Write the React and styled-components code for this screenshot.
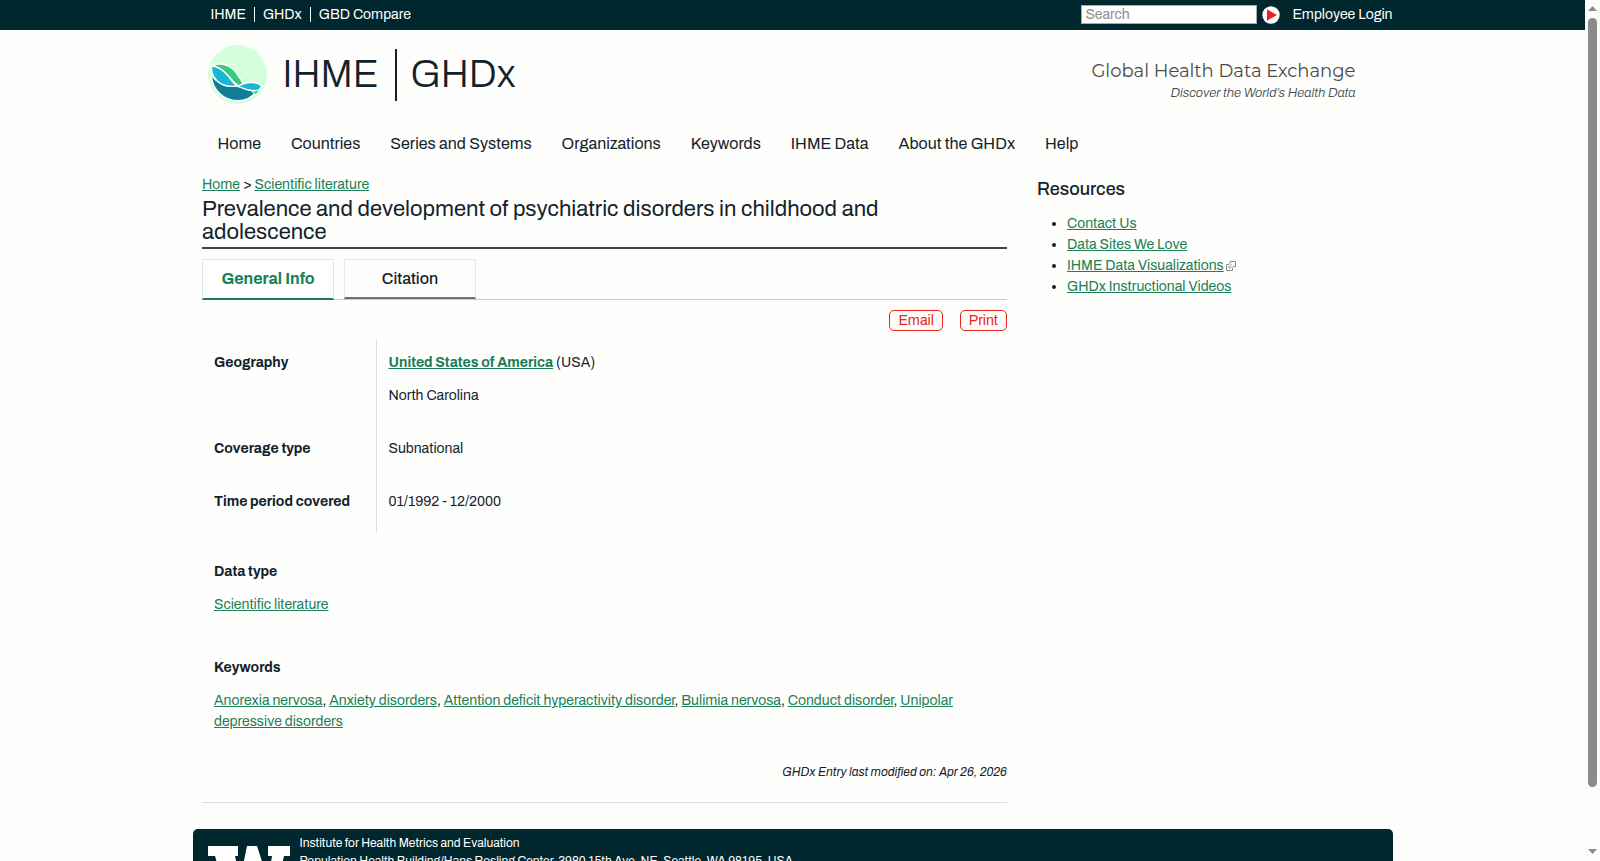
import React from "react";
import styled, { createGlobalStyle } from "styled-components";

const ink = "#13222b";
const navy = "#00262e";
const green = "#1a7f56";
const red = "#e8231a";

const GlobalStyle = createGlobalStyle`
  * { box-sizing: border-box; }
  body {
    margin: 0;
    background: #fefefd;
    color: ${ink};
    font-family: Archivo, "Liberation Sans", Arial, sans-serif;
    font-size: 14px;
    line-height: 21px;
  }
`;

const Window = styled.div`
  display: flex;
  height: 100vh;
`;
const Page = styled.div`
  flex: 1;
  overflow-y: auto;
  scrollbar-width: none;
`;
const Container = styled.div`
  max-width: 1200px;
  margin: 0 auto;
`;

const TopBar = styled.div`
  background: ${navy};
`;
const TopRow = styled(Container)`
  display: flex;
  align-items: center;
  justify-content: space-between;
  height: 30px;
  padding-bottom: 1px;
`;
const SiteLinks = styled.nav`
  display: flex;
  align-items: center;
  padding-left: 10px;
`;
const TopLink = styled.a`
  color: #fff;
  line-height: 15px;
  text-decoration: none;
`;
const SiteLink = styled(TopLink)`
  padding: 0 8px;
  border-left: ${(p) => (p.$first ? "0" : "1px solid #fff")};
`;
const Search = styled.form`
  display: flex;
  align-items: center;
`;
const SearchInput = styled.input`
  width: 176px;
  height: 19px;
  padding: 0 3px;
  border: 1px solid #aaa;
  background: #fff;
  font: inherit;
  &::placeholder { color: #8f8f8f; }
`;
const GoButton = styled.button`
  display: flex;
  margin: 0 12px 0 5px;
  padding: 0;
  border: 0;
  background: none;
`;

const Header = styled(Container)`
  display: flex;
  justify-content: space-between;
  align-items: flex-start;
  padding: 15px 37px 0 15px;
`;
const Brand = styled.a`
  display: flex;
  align-items: center;
  color: ${ink};
  text-decoration: none;
  font-weight: 300;
  font-size: 38px;
  line-height: 58px;
`;
const BrandName = styled.span`
  padding-left: ${(p) => (p.$first ? 16 : 13)}px;
`;
const BrandRule = styled.span`
  width: 2px;
  height: 52px;
  margin-left: 17px;
  background: ${ink};
`;
const Slogan = styled.div`
  padding-top: 14px;
  color: #4a4a4a;
  text-align: right;
`;
const SloganTitle = styled.div`
  font-family: Montserrat, Inter, sans-serif;
  font-size: 18px;
  line-height: 24px;
`;
const SloganText = styled.div`
  font-style: italic;
  font-weight: 300;
  font-size: 13px;
  line-height: 20px;
`;

const MainNav = styled(Container)`
  display: flex;
  gap: 30px;
  padding: 28px 25px 18px;
  font-size: 16px;
  line-height: 24px;
`;
const NavLink = styled.a`
  color: ${ink};
  text-decoration: none;
`;

const Columns = styled(Container)`
  display: flex;
  gap: 30px;
  max-width: 1201px;
  padding: 0 10px;
`;
const Main = styled.main`
  width: 805px;
`;
const Sidebar = styled.aside`
  flex: 1;
  padding-top: 1px;
`;
const Link = styled.a`
  color: ${green};
  font-weight: ${(p) => (p.$bold ? 700 : 400)};
`;
const Title = styled.h1`
  margin: 0 0 10px;
  padding: 3px 0;
  border-bottom: 2px solid #444;
  font-size: 22px;
  font-weight: 400;
  line-height: 23px;
`;
const Tabs = styled.div`
  display: flex;
  gap: 10px;
  height: 41px;
  border-bottom: 1px solid #ccc;
`;
const Tab = styled.button`
  width: 132px;
  height: ${(p) => (p.$active ? 41 : 40)}px;
  padding: 0 0 ${(p) => (p.$active ? 2 : 0)}px;
  border: 1px solid #e6e6e6;
  border-bottom: 2px solid ${(p) => (p.$active ? green : "#68747c")};
  background: ${(p) => (p.$active ? "#fff" : "transparent")};
  color: ${(p) => (p.$active ? green : ink)};
  font: inherit;
  font-size: 16px;
  font-weight: ${(p) => (p.$active ? 700 : 500)};
`;
const Actions = styled.div`
  display: flex;
  justify-content: flex-end;
  gap: 17px;
  padding: 10px 0 9px;
`;
const ActionButton = styled.button`
  height: 21px;
  padding: 0 8px;
  border: 1px solid ${red};
  border-radius: 5px;
  background: none;
  color: ${red};
  font: inherit;
  line-height: 19px;
`;

const Facts = styled.table`
  width: 100%;
  border-collapse: collapse;
`;
const FactName = styled.th`
  width: 174px;
  padding: 12px 12px 20px;
  border-right: 1px solid #ddd;
  text-align: left;
  vertical-align: top;
`;
const FactValue = styled.td`
  padding: 12px 12px 20px;
  vertical-align: top;
`;
const Paragraph = styled.p`
  margin: 0 0 12px;
`;
const Section = styled.section`
  padding: ${(p) => (p.$first ? 29 : 42)}px 40px 0 12px;
`;
const SectionTitle = styled.h2`
  margin: 0 0 12px;
  font-size: 14px;
  line-height: 21px;
`;
const Modified = styled.div`
  padding: 30px 0 19px;
  border-bottom: 1px solid #ddd;
  font-size: 12px;
  font-style: italic;
  text-align: right;
`;

const SideTitle = styled.h2`
  margin: 0;
  font-size: 18px;
  font-weight: 500;
  line-height: 28px;
`;
const SideList = styled.ul`
  margin: 10px 0 0;
  padding-left: 30px;
`;
const ExternalIcon = styled.svg`
  margin-left: 2px;
  vertical-align: -1px;
`;

const Footer = styled(Container)`
  display: flex;
  gap: 10px;
  margin-top: 26px;
  padding: 5px 15px 20px;
  border-radius: 5px;
  background: ${navy};
  color: #fff;
  font-size: 12px;
  line-height: 18px;
`;
const FooterLogo = styled.svg`
  margin-top: 12px;
`;

const ScrollTrack = styled.div`
  display: flex;
  flex-direction: column;
  align-items: center;
  width: 15px;
  padding: 6px 0 7px;
  background: #fcfcfc;
`;
const ScrollThumb = styled.div`
  width: 9px;
  height: 90.7%;
  margin: 7px 0 auto;
  border-radius: 5px;
  background: #8b8b8b;
`;
const Arrow = ({ down }) => (
  <svg width="9" height="5" viewBox="0 0 9 5">
    <path d={down ? "M0 0H9L4.500 5Z" : "M0 5H9L4.500 0Z"} fill="#8b8b8b" />
  </svg>
);

const navItems = ["Home", "Countries", "Series and Systems", "Organizations", "Keywords", "IHME Data", "About the GHDx", "Help"];
const keywords = ["Anorexia nervosa", "Anxiety disorders", "Attention deficit hyperactivity disorder", "Bulimia nervosa", "Conduct disorder", "Unipolar depressive disorders"];
const resources = ["Contact Us", "Data Sites We Love", "IHME Data Visualizations", "GHDx Instructional Videos"];

const WaveLogo = () => (
  <svg width="59" height="59" viewBox="54 135 177 177" aria-hidden="true">
    <circle cx="142.500" cy="223.500" r="88.500" fill="#d4ffdc" />
    <g stroke="#fff" strokeWidth="4" strokeLinejoin="round">
      <path d="M64 222C74 244 97 257 137 257C155 259 166 273 198 274C186 293 165 302 143 302C100 302 66 270 64 222Z" fill="#0f7c98" />
      <path d="M68 195C96 187 120 197 135 214C146 227 151 240 161 251L147 258C134 251 127 240 115 228C102 214 88 204 68 195Z" fill="#36c980" />
      <path d="M64 198C87 200 101 211 113 226C124 239 130 250 142 258C122 261 104 258 92 251C74 239 63 220 64 198Z" fill="#19b7d1" />
      <path d="M144 259C160 249 174 246 190 248C203 249 212 254 214 259C212 267 207 271 197 272C174 273 160 265 144 259Z" fill="#19b7d1" />
      <path d="M186 277C194 273 200 272 207 271C205 276 200 281 197 282Z" fill="#36c980" strokeWidth="2" />
    </g>
  </svg>
);

export default function App() {
  return (
    <Window>
      <GlobalStyle />
      <Page>
        <TopBar>
          <TopRow>
            <SiteLinks>
              <SiteLink href="#" $first>IHME</SiteLink>
              <SiteLink href="#">GHDx</SiteLink>
              <SiteLink href="#">GBD Compare</SiteLink>
            </SiteLinks>
            <Search>
              <SearchInput type="text" placeholder="Search" aria-label="Search" />
              <GoButton type="button" aria-label="Go">
                <svg width="18" height="18" viewBox="0 0 18 18">
                  <circle cx="9" cy="9" r="8.700" fill="#fff" />
                  <path d="M5 3.300L15 9L5 14.700Z" fill={red} />
                </svg>
              </GoButton>
              <TopLink href="#">Employee Login</TopLink>
            </Search>
          </TopRow>
        </TopBar>
        <Header as="header">
          <Brand href="#">
            <WaveLogo />
            <BrandName $first>IHME</BrandName>
            <BrandRule />
            <BrandName>GHDx</BrandName>
          </Brand>
          <Slogan>
            <SloganTitle>Global Health Data Exchange</SloganTitle>
            <SloganText>Discover the World’s Health Data</SloganText>
          </Slogan>
        </Header>
        <MainNav as="nav">
          {navItems.map((item) => <NavLink href="#" key={item}>{item}</NavLink>)}
        </MainNav>
        <Columns>
          <Main>
            <div><Link href="#">Home</Link> &gt; <Link href="#">Scientific literature</Link></div>
            <Title>Prevalence and development of psychiatric disorders in childhood and adolescence</Title>
            <Tabs>
              <Tab type="button" $active>General Info</Tab>
              <Tab type="button">Citation</Tab>
            </Tabs>
            <Actions>
              <ActionButton type="button">Email</ActionButton>
              <ActionButton type="button">Print</ActionButton>
            </Actions>
            <Facts>
              <tbody>
                <tr>
                  <FactName scope="row">Geography</FactName>
                  <FactValue>
                    <Paragraph><Link href="#" $bold>United States of America</Link> (USA)</Paragraph>
                    North Carolina
                  </FactValue>
                </tr>
                <tr>
                  <FactName scope="row">Coverage type</FactName>
                  <FactValue>Subnational</FactValue>
                </tr>
                <tr>
                  <FactName scope="row">Time period covered</FactName>
                  <FactValue>01/1992 - 12/2000</FactValue>
                </tr>
              </tbody>
            </Facts>
            <Section $first>
              <SectionTitle>Data type</SectionTitle>
              <Link href="#">Scientific literature</Link>
            </Section>
            <Section>
              <SectionTitle>Keywords</SectionTitle>
              {keywords.map((word, i) => (
                <React.Fragment key={word}>{i > 0 && ", "}<Link href="#">{word}</Link></React.Fragment>
              ))}
            </Section>
            <Modified>GHDx Entry last modified on: Apr 26, 2026</Modified>
          </Main>
          <Sidebar>
            <SideTitle>Resources</SideTitle>
            <SideList>
              {resources.map((item) => (
                <li key={item}>
                  <Link href="#">{item}</Link>
                  {item === "IHME Data Visualizations" && (
                    <ExternalIcon width="10" height="10" viewBox="0 0 10 10" fill="none" stroke="#8c8c8c">
                      <path d="M4 .5H9.500V6H7.500L6.500 5L4 7.500L2.500 6L5 3.500L4 2.500ZM3 3.500H.5V9.500H6.500V7" />
                    </ExternalIcon>
                  )}
                </li>
              ))}
            </SideList>
          </Sidebar>
        </Columns>
        <Footer as="footer">
          <FooterLogo width="82" height="55" viewBox="0 0 82 55" fill="#fff" aria-hidden="true">
            <path d="M0 0H30V10H27L32 34L39 0H49L60 34L64 10H60V0H82V10H76L66 55H52L44 26L35 55H20L7 10H0Z" />
          </FooterLogo>
          <div>
            Institute for Health Metrics and Evaluation<br />
            Population Health Building/Hans Rosling Center, 3980 15th Ave. NE, Seattle, WA 98195, USA
          </div>
        </Footer>
      </Page>
      <ScrollTrack aria-hidden="true">
        <Arrow />
        <ScrollThumb />
        <Arrow down />
      </ScrollTrack>
    </Window>
  );
}
